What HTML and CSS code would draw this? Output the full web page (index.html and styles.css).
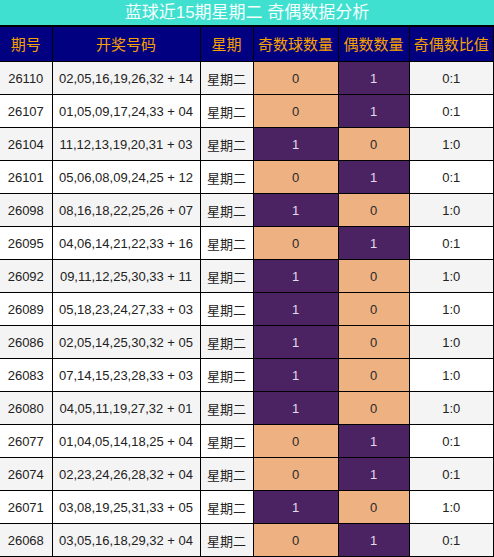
FILE: index.html
```html
<!DOCTYPE html>
<html lang="zh-CN">
<head>
    <meta charset="UTF-8">
    <title>蓝球近15期星期二 奇偶数据分析</title>
    <link rel="stylesheet" href="styles.css">
</head>
<body>
    <div class="title">蓝球近15期星期二 奇偶数据分析</div>
    <table class="data-table">
        <colgroup>
            <col class="c-issue">
            <col class="c-nums">
            <col class="c-week">
            <col class="c-odd">
            <col class="c-even">
            <col class="c-ratio">
        </colgroup>
        <thead>
            <tr>
                <th>期号</th>
                <th>开奖号码</th>
                <th>星期</th>
                <th>奇数球数量</th>
                <th>偶数数量</th>
                <th>奇偶数比值</th>
            </tr>
        </thead>
        <tbody id="rows"></tbody>
    </table>

    <script>
        const draws = [
            ['26110', '02,05,16,19,26,32 + 14', 0],
            ['26107', '01,05,09,17,24,33 + 04', 0],
            ['26104', '11,12,13,19,20,31 + 03', 1],
            ['26101', '05,06,08,09,24,25 + 12', 0],
            ['26098', '08,16,18,22,25,26 + 07', 1],
            ['26095', '04,06,14,21,22,33 + 16', 0],
            ['26092', '09,11,12,25,30,33 + 11', 1],
            ['26089', '05,18,23,24,27,33 + 03', 1],
            ['26086', '02,05,14,25,30,32 + 05', 1],
            ['26083', '07,14,15,23,28,33 + 03', 1],
            ['26080', '04,05,11,19,27,32 + 01', 1],
            ['26077', '01,04,05,14,18,25 + 04', 0],
            ['26074', '02,23,24,26,28,32 + 04', 0],
            ['26071', '03,08,19,25,31,33 + 05', 1],
            ['26068', '03,05,16,18,29,32 + 04', 0]
        ];

        // 1 = purple cell, 0 = peach cell
        const cell = n => `<td class="${n ? 'dark' : 'light'}">${n}</td>`;

        document.getElementById('rows').innerHTML = draws.map(([issue, nums, odd]) => {
            const even = 1 - odd;
            return `<tr>
                <td>${issue}</td>
                <td>${nums}</td>
                <td>星期二</td>
                ${cell(odd)}
                ${cell(even)}
                <td>${odd}:${even}</td>
            </tr>`;
        }).join('');
    </script>
</body>
</html>
```

FILE: styles.css
```css
* {
    margin: 0;
    padding: 0;
    box-sizing: border-box;
}

body {
    width: 494px;
    background: #fff;
    font-family: 'Liberation Sans', 'Noto Sans CJK SC', sans-serif;
}

.title {
    height: 27px;
    background: #40e0d0;
    border-bottom: 2px solid #000;
    color: #f4fffd;
    font-size: 17px;
    line-height: 26px;
    text-align: center;
}

.data-table {
    width: 494px;
    border-collapse: collapse;
    table-layout: fixed;
    border-right: 2px solid #000;
}

.c-issue { width: 52px; }
.c-nums { width: 148px; }
.c-week { width: 53px; }
.c-odd { width: 85px; }
.c-even { width: 71px; }
.c-ratio { width: 85px; }

th, td {
    border: 1px solid #000;
    text-align: center;
    white-space: nowrap;
}

.data-table tr > :first-child {
    border-left: none;
}

th {
    height: 34px;
    background: #000080;
    color: #f7a000;
    font-size: 15px;
    font-weight: normal;
    border-top: none;
}

td {
    height: 33px;
    color: #222;
    font-size: 13px;
    padding-top: 1px;
}

tbody tr:nth-child(odd) {
    background: #f4f4f4;
}

tbody tr:nth-child(even) {
    background: #fff;
}

td.light {
    background: #eeb182;
    color: #2a2a2a;
}

td.dark {
    background: #4b2362;
    color: #e4dcea;
}
```
